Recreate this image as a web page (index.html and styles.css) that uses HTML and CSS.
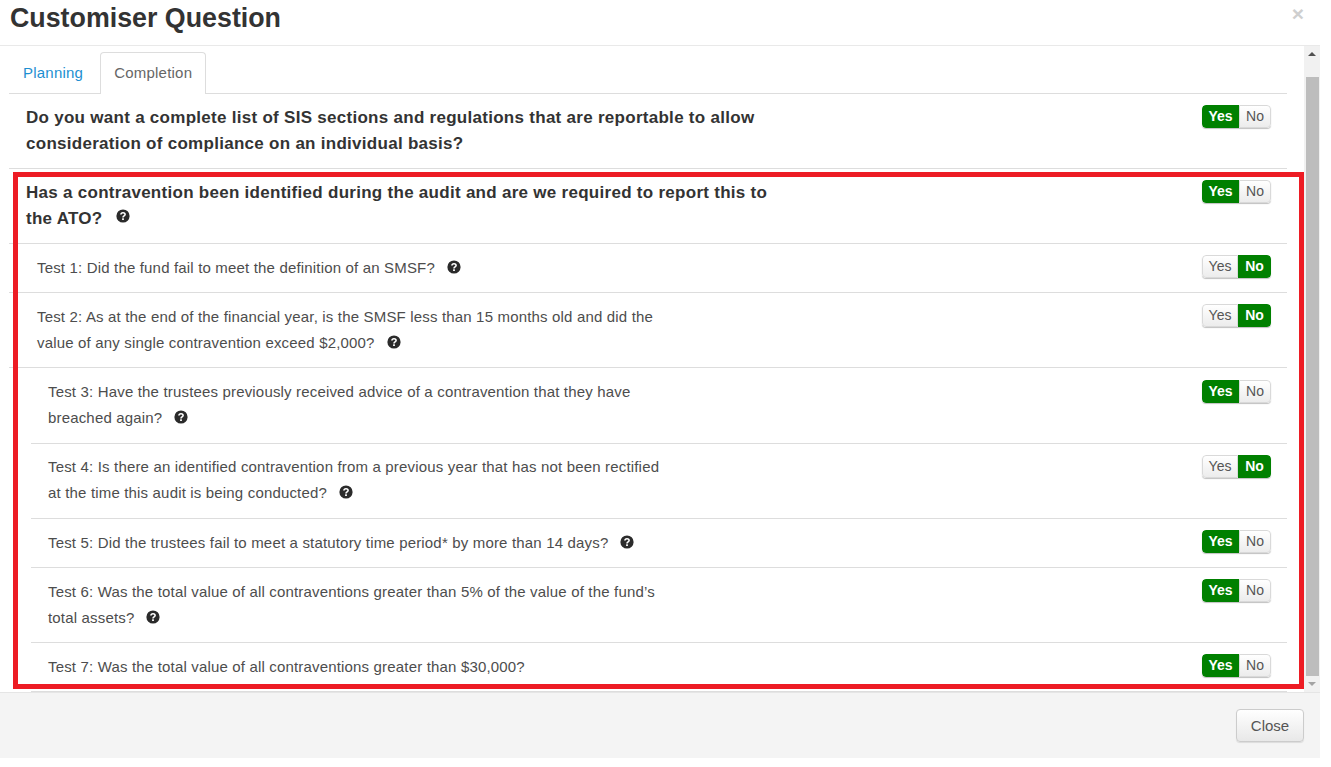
FILE: index.html
```html
<!DOCTYPE html>
<html lang="en">
<head>
<meta charset="utf-8">
<title>Customiser Question</title>
<link rel="stylesheet" href="styles.css">
</head>
<body>
<svg class="defs" width="0" height="0" aria-hidden="true"><symbol id="q" viewBox="0 0 14 14"><circle cx="7" cy="7" r="6.6" fill="#2b2b2b"/><path d="M4.9 5.5C5 4.3 5.9 3.7 7 3.7c1.2 0 2.1.7 2.1 1.7 0 1.5-2.1 1.5-2.1 3" fill="none" stroke="#fff" stroke-width="1.6"/><rect x="6.1" y="9.3" width="1.8" height="1.7" fill="#fff"/></symbol></svg>
<div class="modal">
  <header class="modal-head">
    <h1>Customiser Question</h1>
    <span class="close-x">×</span>
  </header>
  <div class="modal-body">
    <div class="content">
      <nav class="tabs">
        <a class="tab link">Planning</a>
        <a class="tab active">Completion</a>
      </nav>
      <section class="row lvl0">
        <p class="q big">Do you want a complete list of SIS sections and regulations that are reportable to allow consideration of compliance on an individual basis?</p>
        <div class="toggle"><span class="on yes">Yes</span><span class="off no">No</span></div>
      </section>
      <section class="row lvl0">
        <p class="q big">Has a contravention been identified during the audit and are we required to report this to the ATO?<svg class="help"><use href="#q"/></svg></p>
        <div class="toggle"><span class="on yes">Yes</span><span class="off no">No</span></div>
      </section>
      <section class="row lvl1">
        <p class="q">Test 1: Did the fund fail to meet the definition of an SMSF?<svg class="help"><use href="#q"/></svg></p>
        <div class="toggle"><span class="off yes">Yes</span><span class="on no">No</span></div>
      </section>
      <section class="row lvl1">
        <p class="q">Test 2: As at the end of the financial year, is the SMSF less than 15 months old and did the value of any single contravention exceed $2,000?<svg class="help"><use href="#q"/></svg></p>
        <div class="toggle"><span class="off yes">Yes</span><span class="on no">No</span></div>
      </section>
      <section class="row lvl2 taller">
        <p class="q">Test 3: Have the trustees previously received advice of a contravention that they have breached again?<svg class="help"><use href="#q"/></svg></p>
        <div class="toggle"><span class="on yes">Yes</span><span class="off no">No</span></div>
      </section>
      <section class="row lvl2 raised">
        <p class="q">Test 4: Is there an identified contravention from a previous year that has not been rectified at the time this audit is being conducted?<svg class="help"><use href="#q"/></svg></p>
        <div class="toggle"><span class="off yes">Yes</span><span class="on no">No</span></div>
      </section>
      <section class="row lvl2">
        <p class="q">Test 5: Did the trustees fail to meet a statutory time period* by more than 14 days?<svg class="help"><use href="#q"/></svg></p>
        <div class="toggle"><span class="on yes">Yes</span><span class="off no">No</span></div>
      </section>
      <section class="row lvl2">
        <p class="q">Test 6: Was the total value of all contraventions greater than 5% of the value of the fund’s total assets?<svg class="help"><use href="#q"/></svg></p>
        <div class="toggle"><span class="on yes">Yes</span><span class="off no">No</span></div>
      </section>
      <section class="row lvl2">
        <p class="q">Test 7: Was the total value of all contraventions greater than $30,000?</p>
        <div class="toggle"><span class="on yes">Yes</span><span class="off no">No</span></div>
      </section>
    </div>
    <div class="scrollbar">
      <span class="arrow up"></span>
      <span class="thumb"></span>
      <span class="arrow down"></span>
    </div>
    <div class="highlight"></div>
  </div>
  <footer class="modal-foot">
    <button class="btn" type="button">Close</button>
  </footer>
</div>
</body>
</html>
```
FILE: styles.css
```css
html, body { margin: 0; padding: 0; background: #fff; }
body { font-family: "Liberation Sans", Arial, sans-serif; color: #444; width: 1331px; height: 767px; overflow: hidden; }
.defs { position: absolute; }
.modal { width: 1320px; height: 758px; display: flex; flex-direction: column; }
.modal-head { height: 45px; flex: none; display: flex; justify-content: space-between; border-bottom: 1px solid #e9e9e9; box-sizing: content-box; }
.modal-head h1 { margin: 0 0 0 10px; font-size: 26.8px; line-height: 36px; font-weight: 700; color: #333; }
.close-x { margin: 3px 16px 0 0; font-size: 21px; line-height: 21px; font-weight: 700; color: #cfcfcf; }
.modal-body { position: relative; flex: none; height: 646px; display: flex; overflow: hidden; }
.content { flex: 1; min-width: 0; padding-left: 9px; padding-right: 17px; }
.tabs { display: flex; height: 41px; padding-top: 6px; border-bottom: 1px solid #ddd; gap: 3px; }
.tab { display: block; height: 41px; box-sizing: border-box; padding: 10px 13px 0; font-size: 15px; letter-spacing: .22px; line-height: 20px; border: 1px solid transparent; border-bottom: 0; }
.tab.link { color: #1d8fd1; }
.tab.active { color: #666; background: #fff; border-color: #ddd; border-radius: 4px 4px 0 0; height: 42px; }
.row { display: flex; justify-content: space-between; align-items: flex-start; border-bottom: 1px solid #ddd; padding: 11px 16px 11px 0; }
.row.taller { padding-bottom: 12px; }
.row.taller .toggle, .row.raised .toggle { margin-top: 1px; }
.row.raised { padding-top: 10px; padding-bottom: 12px; }
.lvl0 { padding-left: 17px; }
.lvl1 { padding-left: 28px; }
.lvl2 { margin-left: 22px; padding-left: 17px; }
.q { margin: 0; font-size: 15px; letter-spacing: .17px; line-height: 26px; color: #4d4d4d; width: 625px; }
.q.big { font-size: 17px; letter-spacing: .28px; font-weight: 700; color: #333; width: 750px; }
.help { width: 14px; height: 14px; margin-left: 12px; vertical-align: -1px; }
.q.big .help { vertical-align: 1px; margin-left: 13px; }
.toggle { display: flex; width: 69px; height: 23px; margin-top: 0; border-radius: 4px; box-shadow: 0 1px 1px rgba(0,0,0,.25); font-size: 14px; line-height: 23px; overflow: hidden; flex: none; }
.toggle span { display: block; text-align: center; box-sizing: border-box; }
.toggle .yes { border-radius: 4px 0 0 4px; }
.toggle .no { border-radius: 0 4px 4px 0; }
.on.yes { width: 37px; }
.off.no { width: 32px; }
.off.yes { width: 36px; }
.on.no { width: 33px; }
.on { background: #008000; color: #fff; font-weight: 700; }
.off { background: linear-gradient(#fff, #ececec); color: #555; border: 1px solid #d9d9d9; line-height: 20px; }
.scrollbar { width: 16px; flex: none; background: #f1f1f1; display: flex; flex-direction: column; align-items: center; }
.arrow { flex: none; width: 0; height: 0; border-left: 4px solid transparent; border-right: 4px solid transparent; }
.arrow.up { border-bottom: 4px solid #505050; margin: 6px 0 21px; }
.arrow.down { border-top: 4px solid #a3a3a3; margin: 6px 0 6px; }
.thumb { flex: 1; width: 13px; background: #bdbdbd; }
.highlight { position: absolute; left: 13px; top: 126px; width: 1291px; height: 517px; box-sizing: border-box; border: 5px solid #ed1c24; pointer-events: none; }
.modal-foot { flex: 1; background: #f4f4f4; border-top: 1px solid #e5e5e5; display: flex; justify-content: flex-end; align-items: flex-start; padding: 16px 16px 0 0; }
.btn { width: 68px; height: 33px; font: 15px/20px "Liberation Sans", Arial, sans-serif; color: #555; background: linear-gradient(#fff, #e8e8e8); border: 1px solid #ccc; border-radius: 4px; box-shadow: 0 1px 1px rgba(0,0,0,.1); padding: 0; }
```
